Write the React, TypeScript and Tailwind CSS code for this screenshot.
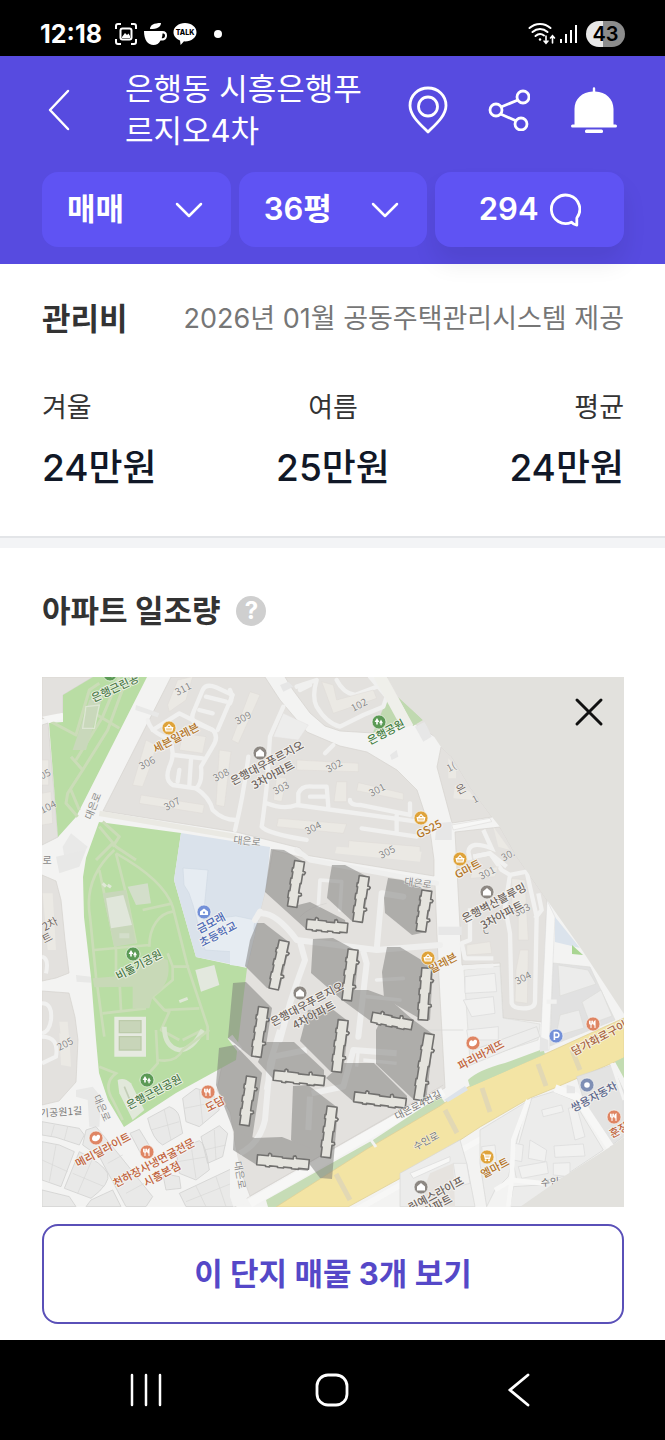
import React from "react";

const FONT = "font-['Inter','Noto_Sans_CJK_KR',sans-serif]";

type MarkerKind = "tree" | "shop" | "home" | "school" | "food" | "bread" | "cart" | "parking" | "dot";

interface Marker {
    x: number;
    y: number;
    kind: MarkerKind;
    fill: string;
}

interface MapLabel {
    x: number;
    y: number;
    text: string;
    fill: string;
    rotate?: number;
    size?: number;
}

interface TowerShape {
    x: number;
    y: number;
    length: number;
    rotate: number;
}

const GREEN = "#5b9a55";
const ORANGE = "#dfa33a";
const RED = "#df8563";
const GRAY = "#8d8883";

const markers: Marker[] = [
    { x: 110, y: 674, kind: "tree", fill: GREEN },
    { x: 169, y: 728, kind: "shop", fill: ORANGE },
    { x: 260, y: 753, kind: "home", fill: GRAY },
    { x: 379, y: 722, kind: "tree", fill: GREEN },
    { x: 421, y: 818, kind: "shop", fill: ORANGE },
    { x: 460, y: 859, kind: "shop", fill: ORANGE },
    { x: 487, y: 892, kind: "home", fill: GRAY },
    { x: 204, y: 912, kind: "school", fill: "#7390d8" },
    { x: 133, y: 954, kind: "tree", fill: GREEN },
    { x: 428, y: 958, kind: "shop", fill: ORANGE },
    { x: 300, y: 993, kind: "home", fill: GRAY },
    { x: 147, y: 1080, kind: "tree", fill: GREEN },
    { x: 208, y: 1092, kind: "food", fill: RED },
    { x: 96, y: 1138, kind: "bread", fill: RED },
    { x: 147, y: 1152, kind: "food", fill: RED },
    { x: 473, y: 1043, kind: "bread", fill: RED },
    { x: 556, y: 1036, kind: "parking", fill: "#7390d8" },
    { x: 593, y: 1024, kind: "food", fill: RED },
    { x: 587, y: 1085, kind: "dot", fill: "#7f8fb5" },
    { x: 614, y: 1117, kind: "food", fill: RED },
    { x: 487, y: 1157, kind: "cart", fill: ORANGE },
    { x: 421, y: 1187, kind: "home", fill: GRAY },
];

const placeLabels: MapLabel[] = [
    { x: 115, y: 688, text: "은행근린공", fill: "#4c7a49", rotate: -25 },
    { x: 176, y: 738, text: "세븐일레븐", fill: "#b3741f" },
    { x: 267, y: 763, text: "은행대우푸르지오", fill: "#6e645d" },
    { x: 273, y: 775, text: "3차아파트", fill: "#6e645d" },
    { x: 386, y: 732, text: "은행공원", fill: "#3f7d3e" },
    { x: 429, y: 829, text: "GS25", fill: "#b3741f" },
    { x: 468, y: 869, text: "G마트", fill: "#b3741f" },
    { x: 494, y: 903, text: "은행벽산블루밍", fill: "#6e645d" },
    { x: 502, y: 915, text: "3차아파트", fill: "#6e645d" },
    { x: 211, y: 923, text: "금모래", fill: "#4a67b5" },
    { x: 218, y: 934, text: "초등학교", fill: "#4a67b5" },
    { x: 139, y: 965, text: "비둘기공원", fill: "#4c7a49" },
    { x: 443, y: 963, text: "일레븐", fill: "#b3741f" },
    { x: 307, y: 1004, text: "은행대우푸르지오", fill: "#6e645d" },
    { x: 314, y: 1015, text: "4차아파트", fill: "#6e645d" },
    { x: 154, y: 1092, text: "은행근린공원", fill: "#4c7a49" },
    { x: 215, y: 1104, text: "도담", fill: "#c0613a" },
    { x: 103, y: 1150, text: "메리딜라이트", fill: "#c0613a" },
    { x: 154, y: 1163, text: "천하장사냉면굴전문", fill: "#c0613a" },
    { x: 162, y: 1174, text: "시흥본점", fill: "#c0613a" },
    { x: 481, y: 1055, text: "파리바게뜨", fill: "#c0613a" },
    { x: 599, y: 1038, text: "담가화로구이", fill: "#a8643f" },
    { x: 594, y: 1097, text: "쌍용자동차", fill: "#5c678c" },
    { x: 619, y: 1130, text: "훈장", fill: "#c0613a" },
    { x: 495, y: 1168, text: "엘마트", fill: "#b3741f" },
    { x: 436, y: 1194, text: "린예스라이프", fill: "#6e645d" },
    { x: 438, y: 1205, text: "아파트", fill: "#6e645d" },
];

const roadLabels: MapLabel[] = [
    { x: 93, y: 806, text: "대은로", fill: "#8a8a8a", rotate: -68 },
    { x: 247, y: 841, text: "대은로", fill: "#8a8a8a", rotate: 6 },
    { x: 418, y: 883, text: "대은로", fill: "#8a8a8a", rotate: 8 },
    { x: 47, y: 860, text: "로", fill: "#8a8a8a", rotate: 0 },
    { x: 61, y: 1112, text: "기공원1길", fill: "#777777", rotate: -4 },
    { x: 102, y: 1108, text: "대은로", fill: "#8a8a8a", rotate: 66 },
    { x: 240, y: 1175, text: "대은로", fill: "#8a8a8a", rotate: 80 },
    { x: 418, y: 1105, text: "대은로4번길", fill: "#777777", rotate: -28 },
    { x: 426, y: 1141, text: "수인로", fill: "#777777", rotate: -28 },
    { x: 550, y: 1182, text: "수인", fill: "#777777", rotate: -4 },
    { x: 50, y: 924, text: "2차", fill: "#6e645d", rotate: -28, size: 11 },
    { x: 47, y: 938, text: "트", fill: "#6e645d", rotate: -28, size: 11 },
    { x: 461, y: 789, text: "은", fill: "#6e645d", rotate: -28, size: 11 },
    { x: 486, y: 930, text: "C", fill: "#8a8a8a", rotate: 0 },
    { x: 451, y: 767, text: "1(", fill: "#8a8a8a" },
    { x: 475, y: 799, text: "1", fill: "#8a8a8a" },
    { x: 45, y: 774, text: "05", fill: "#8a8a8a" },
    { x: 48, y: 807, text: "104", fill: "#8a8a8a" },
    { x: 183, y: 689, text: "311", fill: "#8a8a8a" },
    { x: 243, y: 718, text: "309", fill: "#8a8a8a" },
    { x: 147, y: 763, text: "306", fill: "#8a8a8a" },
    { x: 221, y: 775, text: "308", fill: "#8a8a8a" },
    { x: 172, y: 804, text: "307", fill: "#8a8a8a" },
    { x: 359, y: 705, text: "102", fill: "#8a8a8a" },
    { x: 334, y: 766, text: "302", fill: "#8a8a8a" },
    { x: 281, y: 788, text: "303", fill: "#8a8a8a" },
    { x: 377, y: 790, text: "301", fill: "#8a8a8a" },
    { x: 313, y: 828, text: "304", fill: "#8a8a8a" },
    { x: 387, y: 852, text: "305", fill: "#8a8a8a" },
    { x: 508, y: 855, text: "30.", fill: "#8a8a8a" },
    { x: 487, y: 873, text: "301", fill: "#8a8a8a" },
    { x: 522, y: 910, text: "303", fill: "#8a8a8a" },
    { x: 523, y: 978, text: "304", fill: "#8a8a8a" },
    { x: 65, y: 1044, text: "205", fill: "#8a8a8a" },
];

const towers: TowerShape[] = [
    { x: 296, y: 884, length: 46, rotate: 99 },
    { x: 361, y: 899, length: 46, rotate: 98 },
    { x: 327, y: 926, length: 41, rotate: 5 },
    { x: 424, y: 911, length: 41, rotate: 98 },
    { x: 279, y: 965, length: 49, rotate: 102 },
    { x: 350, y: 975, length: 51, rotate: 97 },
    { x: 392, y: 1021, length: 41, rotate: 11 },
    { x: 425, y: 994, length: 52, rotate: 94 },
    { x: 260, y: 1032, length: 50, rotate: 98 },
    { x: 248, y: 1101, length: 49, rotate: 98 },
    { x: 299, y: 1078, length: 51, rotate: 6 },
    { x: 340, y: 1046, length: 52, rotate: 97 },
    { x: 424, y: 1067, length: 67, rotate: 99 },
    { x: 380, y: 1100, length: 52, rotate: 7 },
    { x: 329, y: 1132, length: 51, rotate: 97 },
    { x: 283, y: 1162, length: 52, rotate: 5 },
];

const shadows = [
    "271,849 284,850 304,862 298,905 310,902 345,920 347,932 307,930 265,892",
    "332,865 345,865 370,878 363,922 353,922 327,898 329,882",
    "388,878 402,880 432,893 426,932 412,935 385,913 384,898",
    "257,923 264,923 290,943 280,988 267,988 245,966 250,940",
    "313,939 333,938 359,952 355,990 368,990 387,997 413,1020 411,1032 372,1022 342,1000 311,973",
    "387,947 400,947 433,967 430,1020 417,1017 384,998 382,972",
    "233,983 246,982 272,1008 264,1058 250,1056 228,1038",
    "219,1048 235,1045 262,1073 251,1146 239,1145 216,1085",
    "266,1042 294,1042 324,1070 324,1086 274,1080 258,1062",
    "308,1010 331,1008 349,1022 343,1073 331,1072 300,1041",
    "384,1014 408,1016 434,1035 426,1101 413,1099 376,1064 376,1030",
    "343,1063 374,1063 407,1096 405,1109 355,1103 326,1078",
    "293,1086 308,1085 338,1108 332,1179 320,1178 291,1140",
    "234,1132 255,1138 282,1137 310,1148 308,1171 257,1165 233,1150",
];

function Glyph({ kind }: { kind: MarkerKind }) {
    switch (kind) {
        case "tree":
            return <path d="M-2-4l2.4 4h-1.6v2.6h-1.6V0h-1.6zM2-2.4L4 1.2H2.7v2H1.4v-2H0z" fill="#fff" />;
        case "shop":
            return (
                <g fill="none" stroke="#fff" strokeWidth="1.1">
                    <path d="M-3.8-.4h7.6L3 3h-6z" fill="#fff" fillOpacity=".5" />
                    <path d="M-2.6-.6L0-3.4 2.6-.6" />
                </g>
            );
        case "home":
            return <path d="M-4-.4L0-4 4-.4V3.6H-4z" fill="#fff" />;
        case "school":
            return (
                <g>
                    <path d="M-4 3V-.4L0-3.6 4-.4V3z" fill="#fff" />
                    <circle cy=".6" r="1.1" fill="#7390d8" />
                </g>
            );
        case "food":
            return (
                <g stroke="#fff" strokeWidth="1.1" fill="none" strokeLinecap="round">
                    <path d="M-3.4-3v2.4c0 1 2.8 1 2.8 0V-3M-2-3v6.4" />
                    <path d="M2 3.4V-3c-1.8 1-1.8 4 0 4" fill="#fff" />
                </g>
            );
        case "bread":
            return <path d="M-4 .4C-3.4-3-1-3.4 0-1.6 1-4 3.4-3.6 4-2 4.4 1.6 1 3.4-1 3.2-3 3-4.2 2-4 .4z" fill="#fff" />;
        case "cart":
            return (
                <g fill="none" stroke="#fff" strokeWidth="1.1">
                    <path d="M-4.4-3h1.6l1 4.4h4.4l1-3.4h-6" fill="#fff" fillOpacity=".6" />
                    <circle cx="-1.4" cy="3.2" r=".5" />
                    <circle cx="2" cy="3.2" r=".5" />
                </g>
            );
        case "parking":
            return <path d="M-1.6 4v-7.4H.6a2.2 2.2 0 010 4.6h-2.2" fill="none" stroke="#fff" strokeWidth="1.6" />;
        default:
            return <circle r="2.8" fill="#fff" />;
    }
}

function Label({ x, y, text, fill, rotate = -28, size = 10, halo = 2, bold = false }: MapLabel & { halo?: number; bold?: boolean }) {
    return (
        <text
            x={x}
            y={y}
            dy={size * 0.36}
            transform={`rotate(${rotate} ${x} ${y})`}
            textAnchor="middle"
            fontSize={size}
            fontWeight={bold ? 500 : 400}
            fill={fill}
            stroke="#f7f6f3"
            strokeOpacity={0.8}
            strokeWidth={halo}
            paintOrder="stroke"
            strokeLinejoin="round"
        >
            {text}
        </text>
    );
}

function Tower({ x, y, length, rotate }: TowerShape) {
    const h = length / 2;
    const q = length / 4;
    const d = `M${-h}-5H${-q - 2}v-1.6l1-1 2 1v1.6H-1v1H${q - 3}v-2.6l2-.6 1 1.4v1.2H${h}V5H${q + 3}v1H${q - 4}v-1H1v1H-5v-1H${-q}v1H${-q - 4}v-1H${-h}z`;
    return (
        <path
            d={d}
            transform={`translate(${x} ${y}) rotate(${rotate})`}
            fill="#e5e4de"
            stroke="#72716f"
            strokeWidth="1.6"
            strokeLinejoin="round"
        />
    );
}

/* A map tile is drawn on a grid three times finer than the map itself. */
function Tile({ x, y, children }: { x: number; y: number; children: React.ReactNode }) {
    return <g transform={`translate(${x} ${y}) scale(0.3333)`}>{children}</g>;
}

function SunlightMap() {
    return (
        <svg viewBox="42 677 582 530" className="block w-full font-['Noto_Sans_CJK_KR',sans-serif]" role="img" aria-label="아파트 일조량 지도">
            <rect x="42" y="677" width="582" height="530" fill="#f3f3f2" />

            {/* residential land */}
            <g fill="#e3e1de" stroke="#d5d2cf" strokeWidth=".7">
                <path d="M42 677H93L63 695V713L42 719zM42 725L48 723 58 837 42 845z" />
                <path d="M171 677H265L280 700 307 732 340 746 367 752 397 770 417 790 423 808 430 830 434 860 434 876 305 855 300 848 236 832 103 811z" />
                <path d="M285 677L293 690 310 713 325 726 340 731 373 733 387 700 370 677z" />
                <path d="M384 677H400L440 740 415 724z" />
                <path d="M441 747L437 767 452 823 492 817 470 787 452 757z" />
                <path d="M455 832L500 827 517 857 547 900 543 1022 503 1018 500 963 462 965z" />
                <path d="M273 850L300 857 435 884 438 960 445 1088 405 1108 250 1196 238 1163 230 1112 217 1090 225 1050 247 967 267 883z" />
                <path d="M42 875L56 881 61 900 65 940 69 973 56 978 42 981zM42 991L69 993 75 1017 78 1040 76 1082 59 1101 42 1105z" />
            </g>
            <g fill="#ececeb" stroke="#dcdcda" strokeWidth=".7">
                <path d="M464 970L500 966 503 1018 540 1024 538 1040 470 1062z" />
                <path d="M553 963L590 967 615 1020 550 1046z" fill="#e1e1e1" />
                <path d="M558 965L588 970 596 984 560 996zM582 1002L601 990 612 1016 590 1024zM560 1015L579 1010 584 1028 556 1036z" />
            </g>
            <path d="M547 900L555 917 549 1050 540 1052z" fill="#f6f6f5" stroke="#dadada" strokeWidth=".5" />
            <path d="M555 917L580 948 555 942z" fill="#dbe3ec" />
            <path d="M572 945L583 955 572 954z" fill="#a9d592" />

            {/* parks and school */}
            <g fill="#b9dda4">
                <path d="M63 695L93 677H147L76 817 58 837 49 723 63 722z" />
                <path d="M99 822L181 833 174 880 196 957 247 968 236 1060 176 1093 124 1127 108 1100 99 1073 96 1040 91 977 84 917 83 877 86 858z" />
                <path d="M388 697L373 733 404 726zM398 697L423 720 413 726z" fill="#c0d9b0" />
            </g>
            <path d="M181 833L270 847 267 883 247 967 236 965 196 957 174 880z" fill="#dae2eb" />
            <path d="M183 868L208 870 203 920 236 916 255 920 250 955 236 952 205 950 193 905 189 893 184 885z" fill="#e6ecf2" stroke="#cfd8e2" strokeWidth=".6" />

            {/* north-west park and estate 306-311 */}
            <Tile x={36} y={670}>
                <g fill="none" stroke="#cbdcb8" strokeWidth="9" strokeLinejoin="round">
                    <path d="M45 155L120 195 160 60 190 40M270 30L215 180 140 300 95 370 90 400 125 440M250 20L200 140 120 270M175 130L250 175M105 360L130 420M105 260L140 300" />
                    <path d="M190 470L240 530 300 570M230 520L180 570M200 455L250 500 230 530" />
                </g>
                <path d="M160 90L200 80 150 240 110 240z" fill="#c9d8bb" />
                <path d="M150 110L190 105 175 175 140 175z" fill="none" stroke="#dde6d3" strokeWidth="4" />
                <path d="M18 140L80 128V148L40 158z" fill="#f6f6f5" />
                <g fill="none" stroke="#f0f0ef" strokeWidth="13" strokeLinejoin="round" strokeLinecap="round">
                    <path d="M335 150Q345 190 400 205Q420 250 400 290Q385 330 410 345L480 355Q500 340 495 290L530 230Q550 200 530 180L480 160Q460 150 475 120L500 60Q510 40 540 52L590 75L545 180" />
                    <path d="M500 265L415 255M430 300L425 335M465 270L460 345M490 120L530 130M510 80L570 95M480 355Q520 380 530 420Q560 450 600 450" />
                    <path d="M350 180L430 130 530 180" />
                </g>
                <g fill="#ebe9e4" stroke="#dedbd6" strokeWidth="1.5">
                    <path d="M425 30L470 20 450 90 400 125 395 105z" />
                    <path d="M330 210L360 225 350 270 320 350 290 345z" />
                    <path d="M315 375L505 405 500 430 310 400z" />
                    <path d="M550 240L585 245 565 410 540 405z" />
                    <path d="M440 190L510 200 500 250 430 240z" />
                    <path d="M18 270H38V345H18zM18 370L45 365 50 460 18 465z" />
                </g>
                <path d="M105 490L155 530 130 570 85 560 80 530z" fill="#e9e9e8" />
                <path d="M300 105L370 130 365 142 298 120z" fill="#e8e8e7" />
                <path d="M190 430L600 500" stroke="#eae9e3" strokeWidth="16" />
            </Tile>

            {/* estate 301-305 */}
            <Tile x={230} y={670}>
                <g fill="none" stroke="#f0f0ef" strokeWidth="13" strokeLinejoin="round" strokeLinecap="round">
                    <path d="M200 50L260 30Q245 80 260 110Q290 160 330 170L400 135 460 110 470 80 420 20M320 30Q340 70 375 75L440 50M210 60L240 45" />
                    <path d="M160 110L120 200 110 350Q100 440 95 470Q110 490 230 510M110 400Q160 420 200 405L600 460M205 405V370Q215 345 250 350H290L295 410M240 380H290" />
                    <path d="M360 390Q360 405 390 405L540 435L540 400M395 475L560 500M500 435V485M55 260Q40 380 15 480M0 60Q10 80 0 100" />
                    <path d="M285 250L310 225" />
                </g>
                <g fill="#ebe9e4" stroke="#dedbd6" strokeWidth="1.5">
                    <path d="M275 35L310 45 320 90 430 60 440 85 310 130z" />
                    <path d="M200 270L385 280 385 305 200 300z" />
                    <path d="M140 320L170 325 155 395 130 390zM320 335H350V395H312z" />
                    <path d="M385 338L520 370 520 390 380 362zM145 445L350 462 340 490 140 470zM357 512L570 530 570 560 355 535z" />
                    <path d="M60 65L90 75 25 220 5 210z" />
                </g>
                <path d="M160 130L235 165 205 210 130 200z" fill="#ededec" stroke="#e0dfdd" />
                <path d="M150 45L175 35 190 50 160 65z" fill="#e6e6e6" />
                <path d="M555 170L585 155 605 200 580 215zM480 255L500 240 505 260 485 270z" fill="#e7e7e7" />
                <path d="M430 20L470 20 550 165 515 175z" fill="#efefea" />
            </Tile>
            <Tile x={420} y={670}>
                <path d="M95 465L210 445 215 455 100 480z" fill="#f7f7f6" stroke="#d9d7d4" strokeWidth="1.5" />
                <path d="M85 265L108 290V325H85zM105 345L150 365 165 390 100 385zM220 470L270 540 235 530z" fill="#ebe9e4" />
                <path d="M190 480L215 535Q150 510 145 545L150 570M160 560L210 550 260 590" fill="none" stroke="#f1f1f0" strokeWidth="13" />
                <path d="M50 460L95 455 95 510 45 510z" fill="#e7e7e7" />
            </Tile>

            {/* pigeon park */}
            <Tile x={36} y={850}>
                <g fill="none" stroke="#cbddb8" strokeWidth="8" strokeLinejoin="round">
                    <path d="M235 0C170 60 150 130 162 200L180 380 205 560M240 10C330 60 390 110 410 170L455 350 515 530V570M190 60L240 300V380M175 300L340 285M340 290C340 230 370 190 410 185M320 180L410 160M460 350H410L395 310M250 380L255 480M200 490L330 475M340 430L385 480 490 475M410 350V390L350 440" />
                    <path d="M240 10L270 130 300 280M385 480L400 485 375 540 430 570M500 540L440 570" />
                </g>
                <path d="M200 130L270 120 300 280 235 290z" fill="#c8d7ba" />
                <path d="M210 145L262 135 288 225 225 235z" fill="#e0e6da" />
                <path d="M250 250H280V265H250zM275 110L335 100 345 160 300 165z" fill="#d3deca" />
                <path d="M170 385L290 375Q340 300 395 330Q410 400 350 440L340 475H290V410L175 412z" fill="#c8d9b7" />
                <path d="M478 360L535 345 550 405 495 425z" fill="#e3e8de" />
                <path d="M235 500H330V620H235z" fill="#e6eae0" />
                <path d="M250 512H315V548H250zM250 560H315V600H250z" fill="#c8d5b9" stroke="#bccbaa" strokeWidth="4" />
                <path d="M200 100L210 110M215 105L225 112M430 455L455 445" stroke="#dfe8d6" strokeWidth="9" />
                <path d="M385 530Q385 590 430 600 470 600 500 540" fill="none" stroke="#d9e5cf" strokeWidth="14" />
                <path d="M60 20L150 0 130 50 70 70zM120 375L165 380V398L122 395z" fill="#e8e8e7" />
                <g fill="#ebe9e4">
                    <path d="M20 130H50L60 300H35zM70 515H95L100 570H75z" />
                </g>
                <path d="M18 320Q40 325 30 370M18 460Q50 460 45 510 40 545 18 550" fill="none" stroke="#f1f1f0" strokeWidth="12" />
            </Tile>
            <Tile x={36} y={1030}>
                <path d="M245 150Q265 140 285 160L325 240 290 270 250 190z" fill="#e1e8da" />
                <path d="M265 170L290 230" stroke="#c2cdb6" strokeWidth="5" />
                <path d="M190 110L240 130Q200 160 230 210L260 270M360 0L365 100 320 150M365 90Q420 100 440 60L520 0" fill="none" stroke="#cbddb8" strokeWidth="8" />
                <path d="M70 10L100 15 105 110 75 105z" fill="#ebe9e4" />
                <path d="M18 20Q70 20 60 80L18 100" fill="none" stroke="#f1f1f0" strokeWidth="12" />
                <path d="M120 180L170 170 195 200 190 290 160 290 155 210 120 200z" fill="#e8e8e7" />
                {/* small city blocks */}
                <g fill="#e9e9e8" stroke="#d2d2d1" strokeWidth="2.5" strokeLinejoin="round">
                    <path d="M18 275L130 295 145 315 130 345 60 322 18 315zM18 335L70 345 115 365 75 470 18 450z" />
                    <path d="M130 365Q200 400 215 430 225 460 165 505L85 475zM150 300L180 290 250 375 350 500 330 530H270L190 380 140 345z" />
                    <path d="M335 265L400 230Q425 240 430 260L440 310 380 345Q350 330 335 265zM440 205L480 175 530 190 550 240 490 290 450 275z" />
                    <path d="M420 360L490 332Q510 340 520 420L480 450 430 430zM495 320L550 287 575 310 560 380 515 400zM430 490L600 410V530H450z" />
                    <path d="M282 310L310 298 345 355 315 372zM18 480L100 500 120 530H18zM380 430L430 440 435 475 390 480zM165 510L230 480 255 530H150z" />
                </g>
                <g stroke="#d8d8d7" strokeWidth="2" fill="none">
                    <path d="M55 285L45 320M95 290L85 330M18 390L95 425M60 345L40 455M170 385L125 490M110 430L205 470M215 400L260 375M250 440L290 420M270 490L325 460" />
                    <path d="M385 240L405 330M345 300L430 275M490 180L500 280M445 235L545 215M465 345L480 445M425 395L515 380M535 300L540 390M505 360L570 345M480 468L510 530M540 440L570 530M450 515L600 455" />
                </g>
            </Tile>

            {/* estate roads */}
            <Tile x={230} y={850}>
                <g fill="none" stroke="#efefee" strokeWidth="18" strokeLinejoin="round" strokeLinecap="round">
                    <path d="M95 190Q140 190 200 270L440 300 630 285M210 275L225 330 200 400 180 460 150 570M400 305L410 340 385 560M440 300L455 130 520 140M90 185L75 210" />
                    <path d="M265 170L270 90 335 95 330 180M440 390L520 385M410 440L510 450" strokeWidth="11" />
                    <path d="M200 0L240 30 620 100" strokeWidth="15" />
                </g>
                <path d="M210 200Q240 170 290 160" fill="none" stroke="#dad8d5" strokeWidth="3" />
                <path d="M320 -10L575 5 570 35 315 10z" fill="#ebe9e4" />
                <path d="M0 210L60 215 75 250 50 350 0 345z" fill="#e6ecf2" />
            </Tile>
            <Tile x={230} y={1030}>
                <g fill="none" stroke="#efefee" strokeWidth="18" strokeLinejoin="round">
                    <path d="M150 0L120 100 105 270Q90 340 30 370M110 180L130 80 230 60M240 200L235 300M245 190L340 170 370 60 500 70M0 20L30 60" />
                    <path d="M385 60L380 110M400 90L500 100" strokeWidth="10" />
                </g>
                <path d="M0 250Q20 400 60 520L10 530 0 500z" fill="#f3f3f2" />
                <path d="M60 520L640 185" stroke="#f7f7f6" strokeWidth="26" />
                <path d="M50 505L640 165" stroke="#d4d2cf" strokeWidth="2" />
            </Tile>

            {/* green verge and highway */}
            <path d="M266 1200L373 1140 440 1096 446 1104 367 1150 280 1207H268z" fill="#c6dcb6" />
            <path d="M276 1207L367 1149 440 1106 468 1087 547 1053 624 1018V1058L557 1087 530 1098 480 1127 410 1173 348 1207z" fill="#f3e4a4" stroke="#e0d198" strokeWidth=".8" />
            <path d="M468 1080Q478 1070 505 1063L543 1049 545 1054 470 1087z" fill="#c3dcb2" />
            <path d="M444 1100L465 1086 468 1090 448 1102z" fill="#dde3ea" />
            <g stroke="#e2d8b4" strokeWidth="5">
                <path d="M445 1110L457 1133M482 1088L490 1112M538 1064L546 1086M572 1050L580 1070M336 1174L350 1200" />
            </g>
            <path d="M371 1140L376 1147" stroke="#f3f3f2" strokeWidth="3" />
            <path d="M353 1212L488 1135" stroke="#f7f7f6" strokeWidth="6" />

            {/* south-east */}
            <Tile x={430} y={1030}>
                <g fill="#ececeb" stroke="#d6d6d5" strokeWidth="2">
                    <path d="M150 300L290 215 235 440 195 480 170 530 150 400z" />
                    <path d="M305 205L370 185 430 210 520 360 400 440 330 455 260 450 250 400z" />
                    <path d="M440 140L545 105 580 180V320L540 350 470 240z" fill="#e3e3e2" />
                    <path d="M-90 430L0 380 90 330 110 400 135 530H-90z" />
                    <path d="M250 470L330 465 400 445 280 530H240z" />
                    <path d="M100 0L-10 0M110 110L130 60 320 -10 330 20z" fill="#ededec" />
                </g>
                <g fill="#f1f1f0" stroke="#dadad9" strokeWidth="2">
                    <path d="M335 240L395 225 400 245 340 260zM415 235L440 230 465 320 435 330zM372 348L460 342 465 378 375 382zM300 330L350 360 345 395 295 385zM265 410L350 395 355 430 275 445zM370 400L420 398V440L370 435zM155 350L195 345 200 400 160 400zM70 400L110 400 120 460 80 470zM255 340L280 345 275 395 250 390z" />
                    <path d="M-60 430L60 380V395L-50 445z" fill="#f7f7f6" />
                </g>
                <path d="M0 430L70 400 75 530H-40z" fill="#e6e3df" />
                <path d="M295 210L250 330 245 450 235 530M195 480L245 450 340 460" fill="none" stroke="#f7f7f6" strokeWidth="14" />
                <path d="M375 175L440 200 540 350" fill="none" stroke="#f7f7f6" strokeWidth="24" />
                <path d="M555 95L582 82V145z" fill="#c3dcb2" />
                <path d="M545 100L582 210" stroke="#f3f3f2" strokeWidth="9" />
                <path d="M330 20L355 30V60L330 65zM410 165L435 170V190L410 190z" fill="#e6e6e6" />
            </Tile>

            {/* estate 301-304 east */}
            <Tile x={430} y={850}>
                <g fill="none" stroke="#f1f1f0" strokeWidth="13" strokeLinejoin="round">
                    <path d="M130 20L180 10 215 60 240 75 225 170 240 250 245 460Q250 475 280 475 315 475 315 455L320 200 290 65 240 75M325 130L335 180 315 205M120 175V270L95 280 105 325H190M100 352L190 347" />
                    <path d="M350 455H380" />
                </g>
                <g fill="#ebe9e4" stroke="#dedbd6" strokeWidth="1.5">
                    <path d="M245 85L285 90 295 270 265 270 265 180 245 175zM270 300L295 300 292 460 255 455 258 360z" />
                    <path d="M110 285L180 275 185 310 110 315zM130 60L205 50 195 80 120 85z" />
                </g>
                <path d="M105 380L195 370 200 425 105 430zM100 450L190 440 195 490 125 500zM110 540L205 530V570H115z" fill="#f1f1f0" stroke="#dadad9" strokeWidth="2" />
                <path d="M25 230H95V255H25z" fill="#e7e7e7" />
            </Tile>

            <g fill="#7b7a78" opacity=".5">
                {shadows.map((points) => (
                    <polygon key={points} points={points} />
                ))}
            </g>
            {towers.map((tower) => (
                <Tower key={`${tower.x}-${tower.y}`} {...tower} />
            ))}

            {roadLabels.map((label) => (
                <Label key={`${label.text}-${label.x}`} {...label} halo={1} />
            ))}
            {placeLabels.map((label) => (
                <Label key={`${label.text}-${label.x}`} size={11} {...label} bold />
            ))}
            {markers.map(({ x, y, kind, fill }) => (
                <g key={`${x}-${y}`} transform={`translate(${x} ${y})`}>
                    <circle r="7" fill={fill} stroke="#f7f6f3" strokeOpacity=".7" strokeWidth="1" />
                    <Glyph kind={kind} />
                </g>
            ))}

            {/* area outside the survey */}
            <g fill="#e2e1dd">
                <path d="M388 677L399 697 423 720 441 747 452 757 470 787 492 817 500 827 517 857 547 900 582 950 624 1014V677z" />
                <path d="M624 1137L610 1147 563 1177 520 1207H624z" />
            </g>
        </svg>
    );
}

function StatusBar() {
    return (
        <div className="flex h-14 items-center justify-between bg-black px-10 pt-3 text-white">
            <div className="flex items-center gap-[5px]">
                <span className="mr-2 text-[25px] font-bold leading-6">12:18</span>
                <svg width="22" height="22" viewBox="0 0 22 22" fill="none" stroke="currentColor" strokeWidth="2">
                    <path d="M1 6V3a2 2 0 012-2h3M16 1h3a2 2 0 012 2v3M21 16v3a2 2 0 01-2 2h-3M6 21H3a2 2 0 01-2-2v-3" />
                    <rect x="5.5" y="5.5" width="11" height="11" rx="2" />
                    <path d="M7 14l3-4 2 2 1.5-1.5L15 13v2H7z" fill="currentColor" stroke="none" />
                </svg>
                <svg width="26" height="24" viewBox="0 0 26 24" fill="currentColor">
                    <path d="M2 9h18.500c3 0 4.500 1.500 4.500 4.500s-2 5-5 5h-1.500C17 21.600 14.600 23 11.500 23 6 23 2 18 2 9zm18.500 2.500c0 1.800-.2 3.400-.8 4.800 2 0 3.300-.8 3.300-2.600s-.8-2.200-2.500-2.200z" />
                    <path d="M8 7c0-4 4-6 11-6-.4 4-3.500 6-11 6z" />
                </svg>
                <svg width="24" height="24" viewBox="0 0 24 24">
                    <path d="M12 1c6.400 0 11.500 4 11.500 9.200S18.400 19.400 12 19.400l-1-.1L7.600 23l-.6-4.600C2.800 16.900.5 13.700.5 10.200.5 5 5.600 1 12 1z" fill="currentColor" />
                    <text x="12" y="13" textAnchor="middle" fontSize="7" fontWeight="800" fill="#000">TALK</text>
                </svg>
                <span className="ml-3 size-2 rounded-full bg-white" />
            </div>
            <div className="flex items-center gap-1">
                <svg width="28" height="26" viewBox="0 0 28 26" fill="none" stroke="currentColor" strokeWidth="2" strokeLinecap="round">
                    <path d="M1.5 7C7.5 1.5 16.5 1.5 22.5 7M4.500 11c4.500-4 10.500-4 15 0M7.500 15c2.800-2.400 6-2.400 8.500-.5" />
                    <circle cx="12" cy="18.5" r="1.2" fill="currentColor" stroke="none" />
                    <path d="M18 15v7M16 20l2 2.200 2-2.200M24.500 22v-7M22.500 17l2-2.200 2 2.200" strokeWidth="1.6" />
                </svg>
                <svg width="18" height="22" viewBox="0 0 18 22" fill="currentColor">
                    <path d="M0 16h2v4H0zM5 11h2v9H5zM10 7h2v13h-2zM15 2h2v18h-2z" />
                </svg>
                <span className="ml-1 flex h-[26px] w-[39px] items-center justify-center rounded-full bg-linear-to-r from-[#e8e8e8] from-43% to-[#8c8c8c] to-43% text-[20px] font-semibold leading-6 text-black">
                    43
                </span>
            </div>
        </div>
    );
}

function FilterSelect({ label, value }: { label: string; value: string }) {
    return (
        <div className="relative">
            <select
                aria-label={label}
                defaultValue={value}
                className="h-[75px] w-full appearance-none rounded-2xl bg-[#5f53f3] pl-[25px] text-[31px] font-semibold text-white"
            >
                <option>{value}</option>
            </select>
            <svg className="pointer-events-none absolute right-7 top-[30px]" width="28" height="16" viewBox="0 0 28 16" fill="none" stroke="#fff" strokeWidth="2.5" strokeLinecap="round" strokeLinejoin="round">
                <path d="M2 2l12 12L26 2" />
            </svg>
        </div>
    );
}

function Header() {
    return (
        <header className="relative z-10 bg-[#574be0] pb-[17px] pt-3 text-white">
            <div className="flex items-center pl-[42px] pr-[47px]">
                <button type="button" aria-label="뒤로" className="w-[83px] shrink-0 pl-1.5">
                    <svg width="24" height="42" viewBox="0 0 24 42" fill="none" stroke="currentColor" strokeWidth="2.5" strokeLinecap="round" strokeLinejoin="round">
                        <path d="M20 2L2 21l18 19" />
                    </svg>
                </button>
                <h1 className="mr-6 min-w-0 flex-1 text-[31px] font-normal leading-[42px]">은행동 시흥은행푸르지오4차</h1>
                <div className="flex items-center gap-10">
                    <button type="button" aria-label="위치">
                        <svg width="40" height="48" viewBox="0 0 40 48" fill="none" stroke="currentColor" strokeWidth="2.8">
                            <path d="M20 46C13 39 2 30 2 19.500 2 9.500 10 2 20 2s18 7.500 18 17.500C38 30 27 39 20 46z" strokeLinejoin="round" />
                            <circle cx="20" cy="20.5" r="9.5" />
                        </svg>
                    </button>
                    <button type="button" aria-label="공유">
                        <svg width="42" height="42" viewBox="0 0 42 42" fill="none" stroke="currentColor" strokeWidth="2.8">
                            <circle cx="8" cy="21" r="6" />
                            <circle cx="35" cy="8" r="6" />
                            <circle cx="33" cy="35" r="6" />
                            <path d="M13 18L30 11M12.5 25L28.5 32" />
                        </svg>
                    </button>
                    <button type="button" aria-label="알림">
                        <svg width="48" height="48" viewBox="0 0 48 48" fill="currentColor">
                            <path d="M22.800 2.500a1.200 1.200 0 012.400 0V5.500C36 6 43.500 13 43.500 23v15.500h2a1.500 1.500 0 010 3h-43a1.500 1.500 0 010-3h2V23C4.500 13 12 6 22.800 5.500z" />
                            <rect x="15" y="43.5" width="18" height="3.5" rx="1.5" />
                        </svg>
                    </button>
                </div>
            </div>
            <div className="mt-5 grid grid-cols-3 gap-2 pl-[42px] pr-[41px]">
                <FilterSelect label="거래 유형" value="매매" />
                <FilterSelect label="평형" value="36평" />
                <button type="button" className="flex h-[75px] items-center justify-center gap-2.5 rounded-2xl bg-[#5f53f3] text-[31px] font-semibold shadow-[0_16px_24px_rgba(0,0,0,0.08)]">
                    294
                    <svg width="32" height="34" viewBox="0 0 32 34" fill="none" stroke="currentColor" strokeWidth="2.8" strokeLinejoin="round">
                        <path d="M27.800 25A14.200 14.200 0 1022.500 29.200c1.500 1.600 3.400 2.600 5.300 2.900z" />
                    </svg>
                </button>
            </div>
        </header>
    );
}

const fees = [
    { label: "겨울", value: "24만원", align: "text-left" },
    { label: "여름", value: "25만원", align: "text-center" },
    { label: "평균", value: "24만원", align: "text-right" },
];

export default function App() {
    return (
        <div className={`flex min-h-screen flex-col bg-white ${FONT}`}>
            <StatusBar />
            <Header />
            <main className="flex-1">
                <section className="pb-[42px] pl-[42px] pr-[41px] pt-[34px]">
                    <div className="flex items-center justify-between">
                        <h2 className="text-[31px] font-bold leading-[42px] text-[#333333]">관리비</h2>
                        <p className="text-[27px] leading-[42px] text-[#767676]">2026년 01월 공동주택관리시스템 제공</p>
                    </div>
                    <dl className="mt-12 flex justify-between">
                        {fees.map(({ label, value, align }) => (
                            <div key={label} className={align}>
                                <dt className="text-[27px] leading-10 text-[#333333]">{label}</dt>
                                <dd className="mt-[14px] text-[37px] font-medium leading-[52px] text-[#111827]">{value}</dd>
                            </div>
                        ))}
                    </dl>
                </section>
                <div className="h-3 border-t-2 border-[#e3e5e8] bg-[#f3f4f6]" />
                <section className="pb-4 pl-[42px] pr-[41px] pt-[42px]">
                    <div className="flex items-center gap-4">
                        <h2 className="text-[31px] font-bold leading-[42px] text-[#333333]">아파트 일조량</h2>
                        <button type="button" aria-label="일조량 도움말" className="size-[30px] rounded-full bg-[#cfcfcf] text-[24px] font-bold leading-[30px] text-white">
                            ?
                        </button>
                    </div>
                    <div className="relative mt-[45px]">
                        <SunlightMap />
                        <button type="button" aria-label="닫기" className="absolute right-5 top-5">
                            <svg width="30" height="30" viewBox="0 0 30 30" fill="none" stroke="#111" strokeWidth="3" strokeLinecap="round">
                                <path d="M3 3l24 24M27 3L3 27" />
                            </svg>
                        </button>
                    </div>
                    <button type="button" className="mt-[17px] h-[100px] w-full rounded-2xl border-2 border-[#5a50b8] text-[31px] font-bold text-[#5548c8]">
                        이 단지 매물 3개 보기
                    </button>
                </section>
            </main>
            <nav className="grid h-[100px] grid-cols-3 items-center justify-items-center bg-black px-[53px] text-white">
                <button type="button" aria-label="최근 앱">
                    <svg width="34" height="34" viewBox="0 0 34 34" stroke="currentColor" strokeWidth="2.5" strokeLinecap="round">
                        <path d="M3 2v30M17 2v30M31 2v30" />
                    </svg>
                </button>
                <button type="button" aria-label="홈">
                    <svg width="34" height="34" viewBox="0 0 34 34" fill="none" stroke="currentColor" strokeWidth="2.8">
                        <rect x="2" y="2" width="30" height="30" rx="11" />
                    </svg>
                </button>
                <button type="button" aria-label="뒤로 가기">
                    <svg width="34" height="34" viewBox="0 0 34 34" fill="none" stroke="currentColor" strokeWidth="2.8" strokeLinecap="round">
                        <path d="M26 2L8 17l18 15" />
                    </svg>
                </button>
            </nav>
        </div>
    );
}
